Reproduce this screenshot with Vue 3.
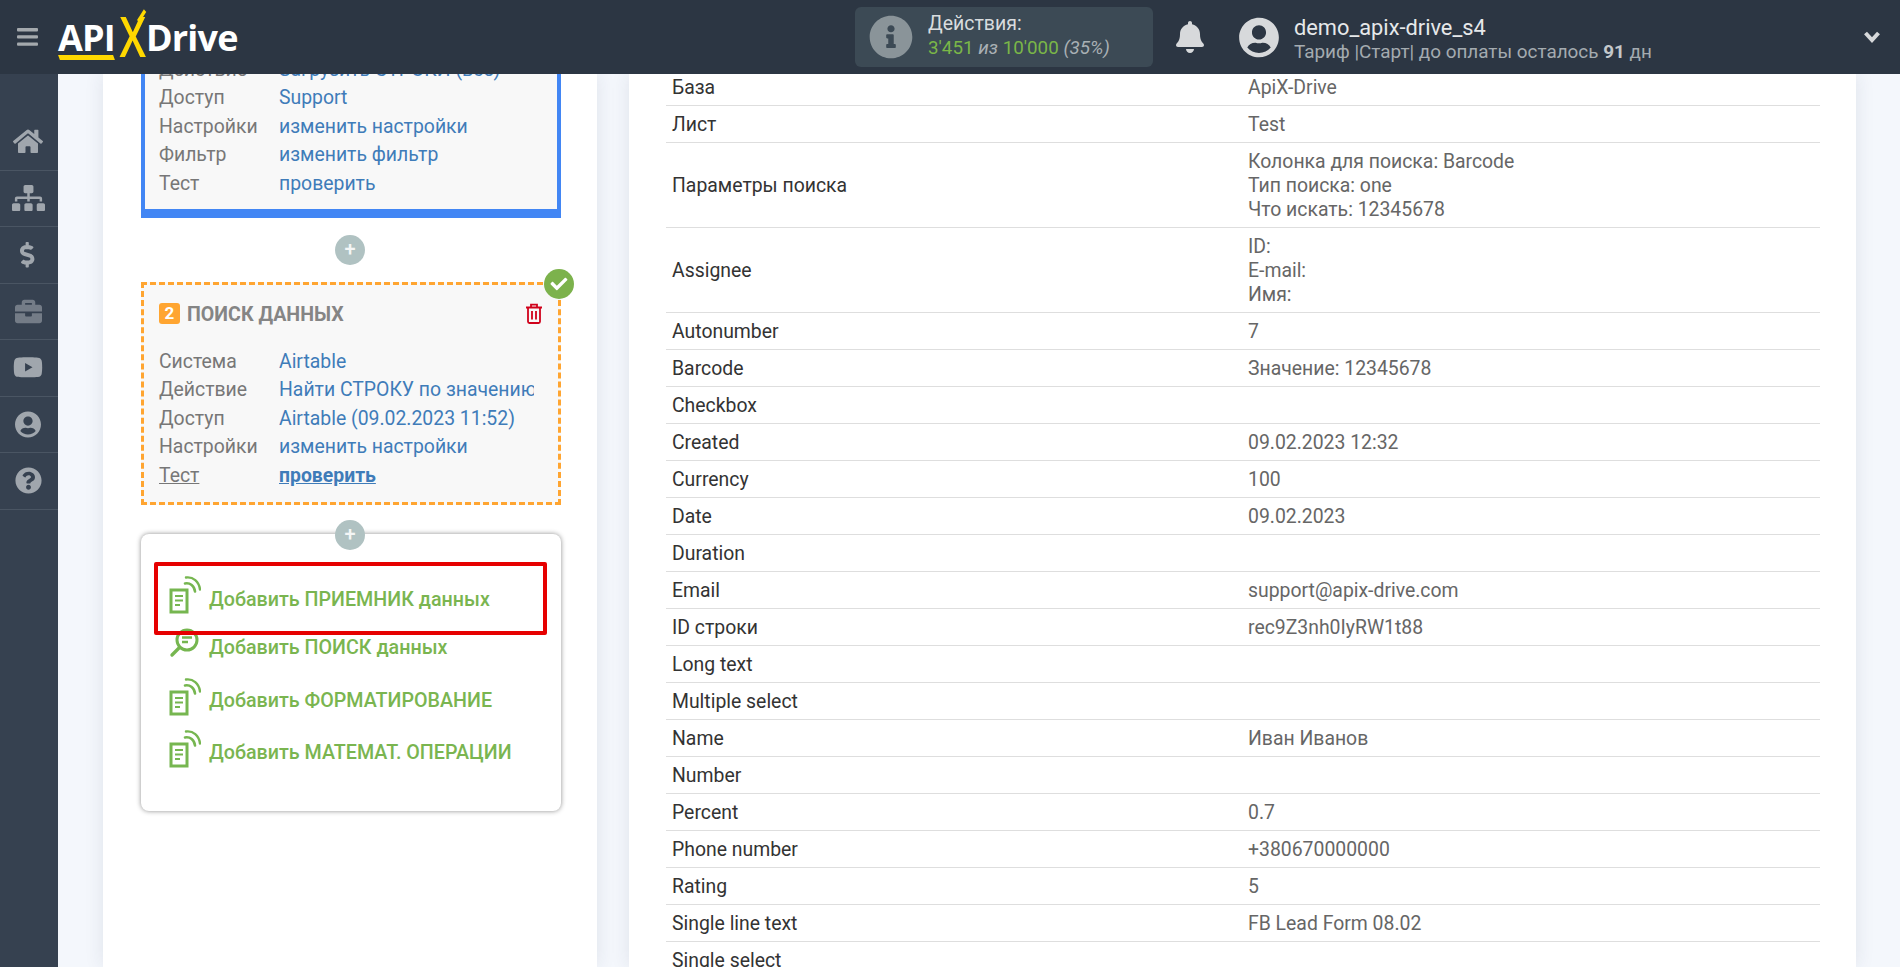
<script setup>
const menu = [
  { name: 'home', box: '0 0 576 512', w: 30, d: 'M280.37 148.26L96 300.11V464a16 16 0 0 0 16 16l112.06-.29a16 16 0 0 0 15.92-16V368a16 16 0 0 1 16-16h64a16 16 0 0 1 16 16v95.64a16 16 0 0 0 16 16.05L464 480a16 16 0 0 0 16-16V300L295.67 148.26a12.19 12.19 0 0 0-15.3 0zM571.6 251.47L488 182.56V44.05a12 12 0 0 0-12-12h-56a12 12 0 0 0-12 12v72.61L318.47 43a48 48 0 0 0-61 0L4.34 251.47a12 12 0 0 0-1.6 16.9l25.5 31A12 12 0 0 0 45.15 301l235.22-193.74a12.19 12.19 0 0 1 15.3 0L530.9 301a12 12 0 0 0 16.9-1.6l25.5-31a12 12 0 0 0-1.7-16.93z' },
  { name: 'map', box: '0 0 640 512', w: 33, d: 'M128 352H32c-17.67 0-32 14.33-32 32v96c0 17.67 14.33 32 32 32h96c17.67 0 32-14.33 32-32v-96c0-17.67-14.33-32-32-32zm-24-80h192v48h48v-48h192v48h48v-57.59c0-21.17-17.23-38.41-38.41-38.41H344v-64h40c17.67 0 32-14.33 32-32V32c0-17.67-14.33-32-32-32H256c-17.67 0-32 14.33-32 32v96c0 17.67 14.33 32 32 32h40v64H94.41C73.23 224 56 241.23 56 262.41V320h48v-48zm264 80h-96c-17.67 0-32 14.33-32 32v96c0 17.67 14.33 32 32 32h96c17.67 0 32-14.33 32-32v-96c0-17.67-14.33-32-32-32zm240 0h-96c-17.67 0-32 14.33-32 32v96c0 17.67 14.33 32 32 32h96c17.67 0 32-14.33 32-32v-96c0-17.67-14.33-32-32-32z' },
  { name: 'dollar', box: '0 0 320 512', w: 16, d: 'M209.2 233.4l-108-31.6C88.7 198.2 80 186.5 80 173.5c0-16.3 13.2-29.5 29.5-29.5h66.3c12.2 0 24.2 3.7 34.2 10.5 6.1 4.1 14.3 3.1 19.5-2l34.8-34c7.1-6.9 6.1-18.4-1.8-24.5C238 74.8 207.4 64.1 176 64V16c0-8.8-7.2-16-16-16h-32c-8.8 0-16 7.2-16 16v48h-2.5C45.8 64-5.4 118.7.5 183.6c4.2 46.1 39.4 83.6 83.8 96.6l102.5 30c12.5 3.7 21.2 15.3 21.2 28.3 0 16.3-13.2 29.5-29.5 29.5h-66.3C100 368 88 364.3 78 357.5c-6.1-4.1-14.3-3.1-19.5 2l-34.8 34c-7.1 6.9-6.1 18.4 1.8 24.5 24.5 19.2 55.1 29.9 86.5 30v48c0 8.8 7.2 16 16 16h32c8.8 0 16-7.2 16-16v-48.2c46.6-.9 90.3-28.6 105.7-72.7 21.5-61.6-14.6-124.8-72.5-141.7z' },
  { name: 'case', box: '0 0 512 512', w: 27, dim: true, d: 'M320 336c0 8.84-7.16 16-16 16h-96c-8.84 0-16-7.16-16-16v-48H0v144c0 25.6 22.4 48 48 48h416c25.6 0 48-22.4 48-48V288H320v48zm144-208h-80V80c0-25.6-22.4-48-48-48H176c-25.6 0-48 22.4-48 48v48H48c-25.6 0-48 22.4-48 48v80h512v-80c0-25.6-22.4-48-48-48zm-144 0H192V96h128v32z' },
  { name: 'video', box: '0 0 576 512', w: 30, d: 'M549.66 124.08c-6.28-23.65-24.79-42.28-48.28-48.6C458.78 64 288 64 288 64S117.22 64 74.62 75.48c-23.5 6.32-42 24.95-48.28 48.6C15 167 15 256.4 15 256.4s0 89.41 11.34 132.32c6.28 23.65 24.79 41.5 48.28 47.82C117.22 448 288 448 288 448s170.78 0 213.38-11.46c23.5-6.32 42-24.17 48.28-47.82C561 345.81 561 256.4 561 256.4s0-89.4-11.34-132.32zM232 337.59V175.22l142.74 81.19L232 337.59z' },
  { name: 'user', box: '0 0 496 512', w: 26, d: 'M248 8C111 8 0 119 0 256s111 248 248 248 248-111 248-248S385 8 248 8zm0 96c48.6 0 88 39.4 88 88s-39.4 88-88 88-88-39.4-88-88 39.4-88 88-88zm0 344c-58.7 0-111.3-26.6-146.5-68.2 18.8-35.4 55.6-59.8 98.5-59.8 2.4 0 4.8.4 7.1 1.1 13 4.2 26.6 6.9 40.9 6.9 14.3 0 28-2.7 40.9-6.9 2.3-.7 4.7-1.1 7.1-1.1 42.9 0 79.7 24.4 98.5 59.8C359.3 421.4 306.7 448 248 448z' },
  { name: 'help', box: '0 0 512 512', w: 27, d: 'M504 256c0 136.997-111.043 248-248 248S8 392.997 8 256C8 119.083 119.043 8 256 8s248 111.083 248 248zM262.655 90c-54.497 0-89.255 22.957-116.549 63.758-3.536 5.286-2.353 12.415 2.715 16.258l34.699 26.31c5.205 3.947 12.621 3.008 16.665-2.122 17.864-22.658 30.113-35.797 57.303-35.797 20.429 0 45.698 13.148 45.698 32.958 0 14.976-12.363 22.667-32.534 33.976C247.128 238.528 216 254.941 216 296v4c0 6.627 5.373 12 12 12h56c6.627 0 12-5.373 12-12v-1.333c0-28.462 83.186-29.647 83.186-106.667 0-58.002-60.165-102-116.531-102zM256 338c-25.365 0-46 20.635-46 46 0 25.364 20.635 46 46 46s46-20.636 46-46c0-25.365-20.635-46-46-46z' }
]

const sourceRows = [
  { label: 'Действие', value: 'Загрузить СТРОКИ (все)' },
  { label: 'Доступ', value: 'Support' },
  { label: 'Настройки', value: 'изменить настройки' },
  { label: 'Фильтр', value: 'изменить фильтр' },
  { label: 'Тест', value: 'проверить' }
]

const searchRows = [
  { label: 'Система', value: 'Airtable' },
  { label: 'Действие', value: 'Найти СТРОКУ по значению' },
  { label: 'Доступ', value: 'Airtable (09.02.2023 11:52)' },
  { label: 'Настройки', value: 'изменить настройки' },
  { label: 'Тест', value: 'проверить', active: true }
]

const addItems = [
  { text: 'Добавить ПРИЕМНИК данных', icon: 'doc', cls: 'first' },
  { text: 'Добавить ПОИСК данных', icon: 'search', cls: 'second' },
  { text: 'Добавить ФОРМАТИРОВАНИЕ', icon: 'doc', cls: 'third' },
  { text: 'Добавить МАТЕМАТ. ОПЕРАЦИИ', icon: 'doc', cls: 'fourth' }
]

const tableRows = [
  ['База', ['ApiX-Drive']],
  ['Лист', ['Test']],
  ['Параметры поиска', ['Колонка для поиска: Barcode', 'Тип поиска: one', 'Что искать: 12345678']],
  ['Assignee', ['ID:', 'E-mail:', 'Имя:']],
  ['Autonumber', ['7']],
  ['Barcode', ['Значение: 12345678']],
  ['Checkbox', ['']],
  ['Created', ['09.02.2023 12:32']],
  ['Currency', ['100']],
  ['Date', ['09.02.2023']],
  ['Duration', ['']],
  ['Email', ['support@apix-drive.com']],
  ['ID строки', ['rec9Z3nh0IyRW1t88']],
  ['Long text', ['']],
  ['Multiple select', ['']],
  ['Name', ['Иван Иванов']],
  ['Number', ['']],
  ['Percent', ['0.7']],
  ['Phone number', ['+380670000000']],
  ['Rating', ['5']],
  ['Single line text', ['FB Lead Form 08.02']],
  ['Single select', ['']]
]
</script>

<template>
  <div class="page">
    <header class="topbar">
      <svg class="burger" viewBox="0 0 21 18" width="21" height="18">
        <rect y="0" width="21" height="3.4" rx="1" />
        <rect y="7.2" width="21" height="3.4" rx="1" />
        <rect y="14.4" width="21" height="3.4" rx="1" />
      </svg>
      <div class="logo">
        <span class="logo-api">API<i class="logo-bar"></i></span>
        <span class="logo-x">X<i class="logo-arm"></i></span>
        <span class="logo-drive">Drive</span>
      </div>

      <div class="usage">
        <svg class="usage-icon" viewBox="0 0 512 512" width="44" height="44">
          <path d="M256 8C119.043 8 8 119.083 8 256c0 136.997 111.043 248 248 248s248-111.003 248-248C504 119.083 392.957 8 256 8zm0 110c23.196 0 42 18.804 42 42s-18.804 42-42 42-42-18.804-42-42 18.804-42 42-42zm56 254c0 6.627-5.373 12-12 12h-88c-6.627 0-12-5.373-12-12v-24c0-6.627 5.373-12 12-12h12v-64h-12c-6.627 0-12-5.373-12-12v-24c0-6.627 5.373-12 12-12h64c6.627 0 12 5.373 12 12v100h12c6.627 0 12 5.373 12 12v24z" />
        </svg>
        <div class="usage-text">
          <div class="usage-title">Действия:</div>
          <div class="usage-stat"><b>3'451</b> <em>из</em> <b>10'000</b> <em>(35%)</em></div>
        </div>
      </div>

      <svg class="bell" viewBox="0 0 448 512" width="28" height="32">
        <path d="M224 512c35.32 0 63.97-28.65 63.97-64H160.03c0 35.35 28.65 64 63.97 64zm215.39-149.71c-19.32-20.76-55.47-51.99-55.47-154.29 0-77.7-54.48-139.9-127.94-155.16V32c0-17.67-14.32-32-31.98-32s-31.98 14.33-31.98 32v20.84C118.56 68.1 64.08 130.3 64.08 208c0 102.3-36.15 133.53-55.47 154.29-6 6.45-8.66 14.16-8.61 21.71.11 16.4 12.98 32 32.1 32h383.8c19.12 0 32-15.6 32.1-32 .05-7.55-2.61-15.27-8.61-21.71z" />
      </svg>

      <svg class="avatar" viewBox="0 0 496 512" width="40" height="41">
        <path d="M248 8C111 8 0 119 0 256s111 248 248 248 248-111 248-248S385 8 248 8zm0 96c48.6 0 88 39.4 88 88s-39.4 88-88 88-88-39.4-88-88 39.4-88 88-88zm0 344c-58.7 0-111.3-26.6-146.5-68.2 18.8-35.4 55.6-59.8 98.5-59.8 2.4 0 4.8.4 7.1 1.1 13 4.2 26.6 6.9 40.9 6.9 14.3 0 28-2.7 40.9-6.9 2.3-.7 4.7-1.1 7.1-1.1 42.9 0 79.7 24.4 98.5 59.8C359.3 421.4 306.7 448 248 448z" />
      </svg>
      <div class="account">
        <div class="account-name">demo_apix-drive_s4</div>
        <div class="account-plan">Тариф |Старт| до оплаты осталось <b>91</b> дн</div>
      </div>

      <svg class="chevron" viewBox="0 0 18 14" width="18" height="14">
        <path d="M2.5 3 L9 10 L15.5 3" />
      </svg>
    </header>

    <div class="body">
      <aside class="sidebar">
        <div v-for="item in menu" :key="item.name" class="side-item" :class="{ dim: item.dim }">
          <svg :viewBox="item.box" :width="item.w"><path :d="item.d" /></svg>
        </div>
      </aside>

      <main class="main">
        <section class="left">
          <div class="card source">
            <div v-for="row in sourceRows" :key="row.label" class="row">
              <span class="row-label">{{ row.label }}</span>
              <span class="row-value">{{ row.value }}</span>
            </div>
          </div>

          <div class="plus plus-one">+</div>

          <div class="card search">
            <svg class="ok" viewBox="0 0 30 30" width="30" height="30">
              <circle cx="15" cy="15" r="15" fill="#7cb24c" />
              <g transform="translate(6.5 6.5) scale(0.033)"><path fill="#fff" d="M173.898 439.404l-166.4-166.4c-9.997-9.997-9.997-26.206 0-36.204l36.203-36.204c9.997-9.998 26.207-9.998 36.204 0L192 312.69 432.095 72.596c9.997-9.997 26.207-9.997 36.204 0l36.203 36.204c9.997 9.997 9.997 26.206 0 36.204l-294.4 294.401c-9.998 9.997-26.207 9.997-36.204-.001z" /></g>
            </svg>
            <div class="card-head">
              <span class="badge">2</span>
              <span class="card-title">ПОИСК ДАННЫХ</span>
              <svg class="trash" viewBox="0 0 18 21" width="18" height="21">
                <path d="M1 4.5h16M6 4.2V1.7h6v2.5M3 4.5v14c0 .9.6 1.5 1.4 1.5h9.2c.8 0 1.4-.6 1.4-1.5v-14M7 8v8.5M11 8v8.5" />
              </svg>
            </div>
            <div v-for="row in searchRows" :key="row.label" class="row" :class="{ active: row.active }">
              <span class="row-label">{{ row.label }}</span>
              <span class="row-value">{{ row.value }}</span>
            </div>
          </div>

          <div class="plus plus-two">+</div>

          <div class="add-box">
            <div class="highlight"></div>
            <div v-for="item in addItems" :key="item.text" class="add-item" :class="item.cls">
              <svg class="add-icon" viewBox="0 0 32 38" width="32" height="38">
                <g v-if="item.icon === 'doc'" fill="none" stroke="#76b650">
                  <rect x="2" y="14" width="16" height="22" stroke-width="3" />
                  <path d="M6 20h8M6 24.5h8M6 29h5" stroke-width="2" />
                  <path d="M16 7.5c5-1 9.5 2.5 10 8" stroke-width="2.6" stroke-linecap="round" />
                  <path d="M17 1.5c7-1 13 4 14 12" stroke-width="2.4" stroke-linecap="round" />
                </g>
                <g v-else fill="none" stroke="#76b650">
                  <circle cx="18" cy="16" r="10" stroke-width="3" />
                  <path d="M13 13.5h10M13 18h6" stroke-width="2.4" />
                  <path d="M10.5 23.5L3 31" stroke-width="3.4" stroke-linecap="round" />
                </g>
              </svg>
              <span>{{ item.text }}</span>
            </div>
          </div>
        </section>

        <section class="right">
          <table class="params">
            <tbody>
              <tr v-for="row in tableRows" :key="row[0]">
                <td class="param-name">{{ row[0] }}</td>
                <td class="param-value">
                  <div v-for="(line, i) in row[1]" :key="i">{{ line }}</div>
                </td>
              </tr>
            </tbody>
          </table>
        </section>
      </main>
    </div>
  </div>
</template>

<style>
html, body {
  margin: 0;
  overflow: hidden;
}
</style>

<style scoped>
.page {
  width: 1900px;
  height: 967px;
  display: flex;
  flex-direction: column;
  overflow: hidden;
  font-family: Roboto, "Liberation Sans", sans-serif;
}

.topbar {
  height: 74px;
  flex: none;
  display: flex;
  align-items: center;
  background: #2c3643;
  position: relative;
  z-index: 2;
}

.burger {
  margin-left: 17px;
  fill: #a4a9ad;
}

.logo {
  margin-left: 20px;
  width: 191px;
  height: 74px;
  display: flex;
  align-items: center;
  font-family: "Open Sans", sans-serif;
  font-weight: 700;
  font-size: 36px;
  color: #fff;
  letter-spacing: -0.8px;
}

.logo-api {
  position: relative;
}

.logo-bar {
  position: absolute;
  left: 1px;
  right: 1px;
  bottom: 2px;
  height: 5px;
  background: #ffd800;
  transform: skewX(20deg);
}

.logo-x {
  position: relative;
  color: #ffd800;
  font-size: 56px;
  font-weight: 600;
  line-height: 56px;
  transform: scaleX(0.76);
  width: 30px;
  text-align: center;
  margin-top: -5px;
  margin-left: 1px;
}

.logo-arm {
  position: absolute;
  left: 27px;
  top: 2px;
  width: 4px;
  height: 14px;
  background: #ffd800;
  transform: rotate(40deg);
}

.logo-drive {
  margin-left: 0;
}

.usage {
  margin-left: 606px;
  width: 298px;
  height: 60px;
  display: flex;
  align-items: center;
  background: #3c4a55;
  border-radius: 6px;
}

.usage-icon {
  margin-left: 14px;
  margin-right: 15px;
  fill: #8a9499;
}

.usage-text {
  margin-top: -2px;
}

.usage-title {
  font-size: 19.5px;
  line-height: 24px;
  color: #d8dcde;
}

.usage-stat {
  font-size: 18.8px;
  line-height: 25px;
  color: #a9b0b4;
}

.usage-stat b {
  font-weight: 400;
  color: #7ab648;
}

.usage-stat em {
  font-style: italic;
}

.bell {
  margin-left: 23px;
  fill: #d7d9db;
}

.avatar {
  margin-left: 35px;
  fill: #d7d9db;
}

.account {
  margin-left: 15px;
  margin-top: -1px;
}

.account-name {
  font-size: 21.8px;
  line-height: 28px;
  padding-top: 2px;
  color: #e6e8ea;
}

.account-plan {
  font-size: 18.9px;
  line-height: 20px;
  color: #a4abb0;
}

.account-plan b {
  font-weight: 700;
  color: #c4c8cb;
}

.chevron {
  position: absolute;
  right: 19px;
  top: 30px;
  fill: none;
  stroke: #d7d9db;
  stroke-width: 4;
}

.body {
  flex: 1;
  display: flex;
  min-height: 0;
}

.sidebar {
  width: 58px;
  flex: none;
  background: #364150;
  padding-top: 40px;
  position: relative;
  z-index: 1;
}

.side-item {
  height: 56.5px;
  display: flex;
  align-items: center;
  justify-content: center;
  padding-right: 2px;
  border-bottom: 1px solid #4a5563;
  box-sizing: border-box;
  fill: #a0a6ad;
}

.side-item.dim {
  fill: #747c87;
}

.main {
  flex: 1;
  display: flex;
  gap: 32px;
  padding: 0 44px 0 45px;
  min-width: 0;
  background: #f4f7fc;
}

.left {
  width: 494px;
  flex: none;
  background: #fff;
  padding: 0 36px 0 38px;
  box-sizing: border-box;
  overflow: hidden;
  box-shadow: 0 0 18px rgba(40, 50, 80, 0.1);
}

.right {
  flex: 1;
  min-width: 0;
  background: #fff;
  overflow: hidden;
  padding: 0 36px 0 37px;
  box-shadow: 0 0 18px rgba(40, 50, 80, 0.1);
}

.card {
  width: 420px;
  box-sizing: border-box;
  background: #f8f8f8;
  position: relative;
}

.source {
  margin-top: -18px;
  padding: 0 14px 11px 14px;
  border: 4px solid #4286f4;
  border-top: 0;
  border-bottom-width: 9px;
}

.search {
  padding: 18px 15px 12px 15px;
  border: 3px dashed #ffa531;
}

.ok {
  position: absolute;
  right: -16px;
  top: -16px;
}

.card-head {
  display: flex;
  align-items: center;
  height: 21px;
  margin-bottom: 24px;
}

.badge {
  width: 21px;
  height: 21px;
  border-radius: 3px;
  background: #ffa531;
  color: #fff;
  font-size: 17px;
  font-weight: 700;
  line-height: 21px;
  text-align: center;
}

.card-title {
  margin-left: 7px;
  font-size: 19.6px;
  font-weight: 700;
  color: #858585;
  position: relative;
  top: 1px;
}

.trash {
  margin-left: auto;
  margin-right: 0;
  fill: none;
  stroke: #d0021b;
  stroke-width: 1.8;
}

.row {
  display: flex;
  font-size: 19.4px;
  line-height: 28.4px;
  white-space: nowrap;
}

.row-label {
  width: 120px;
  flex: none;
  color: #777;
}

.row-value {
  width: 255px;
  overflow: hidden;
  color: #3f7cb9;
}

.row.active .row-label {
  text-decoration: underline;
}

.row.active .row-value {
  font-weight: 700;
  text-decoration: underline;
}

.plus {
  width: 30px;
  height: 30px;
  border-radius: 50%;
  background: #b0c2c2;
  color: #f4f6f6;
  font-size: 20px;
  font-weight: 500;
  line-height: 29px;
  text-align: center;
  margin-left: 194px;
  position: relative;
  z-index: 1;
}

.plus-one {
  margin-top: 17px;
  margin-bottom: 17px;
}

.plus-two {
  margin-top: 15px;
  margin-bottom: -16px;
}

.add-box {
  width: 420px;
  height: 277px;
  box-sizing: border-box;
  background: #fff;
  border-radius: 8px;
  box-shadow: 0 0 5px rgba(0, 0, 0, 0.45);
  position: relative;
  padding-left: 28px;
  padding-top: 41px;
}

.highlight {
  position: absolute;
  left: 13px;
  top: 28px;
  width: 393px;
  height: 73px;
  box-sizing: border-box;
  border: 4px solid #e60000;
  border-radius: 2px;
  z-index: 1;
}

.add-item {
  display: flex;
  align-items: center;
  height: 48px;
  color: #7ab550;
  font-size: 19.7px;
  font-weight: 500;
  white-space: nowrap;
}

.add-item.third {
  height: 59px;
}

.add-item.fourth {
  height: 45px;
}

.add-icon {
  margin-right: 8px;
  margin-top: -8px;
  flex: none;
}

.params {
  width: 1154px;
  border-collapse: collapse;
  table-layout: fixed;
  margin-top: -5px;
  font-size: 19.4px;
  line-height: 24px;
}

.params td {
  padding: 7px 6px 5px;
  border-bottom: 1px solid #dedede;
  vertical-align: middle;
}

.param-name {
  width: 564px;
  color: #333;
}

.param-value {
  color: #666;
}

.param-value div {
  min-height: 24px;
}
</style>
